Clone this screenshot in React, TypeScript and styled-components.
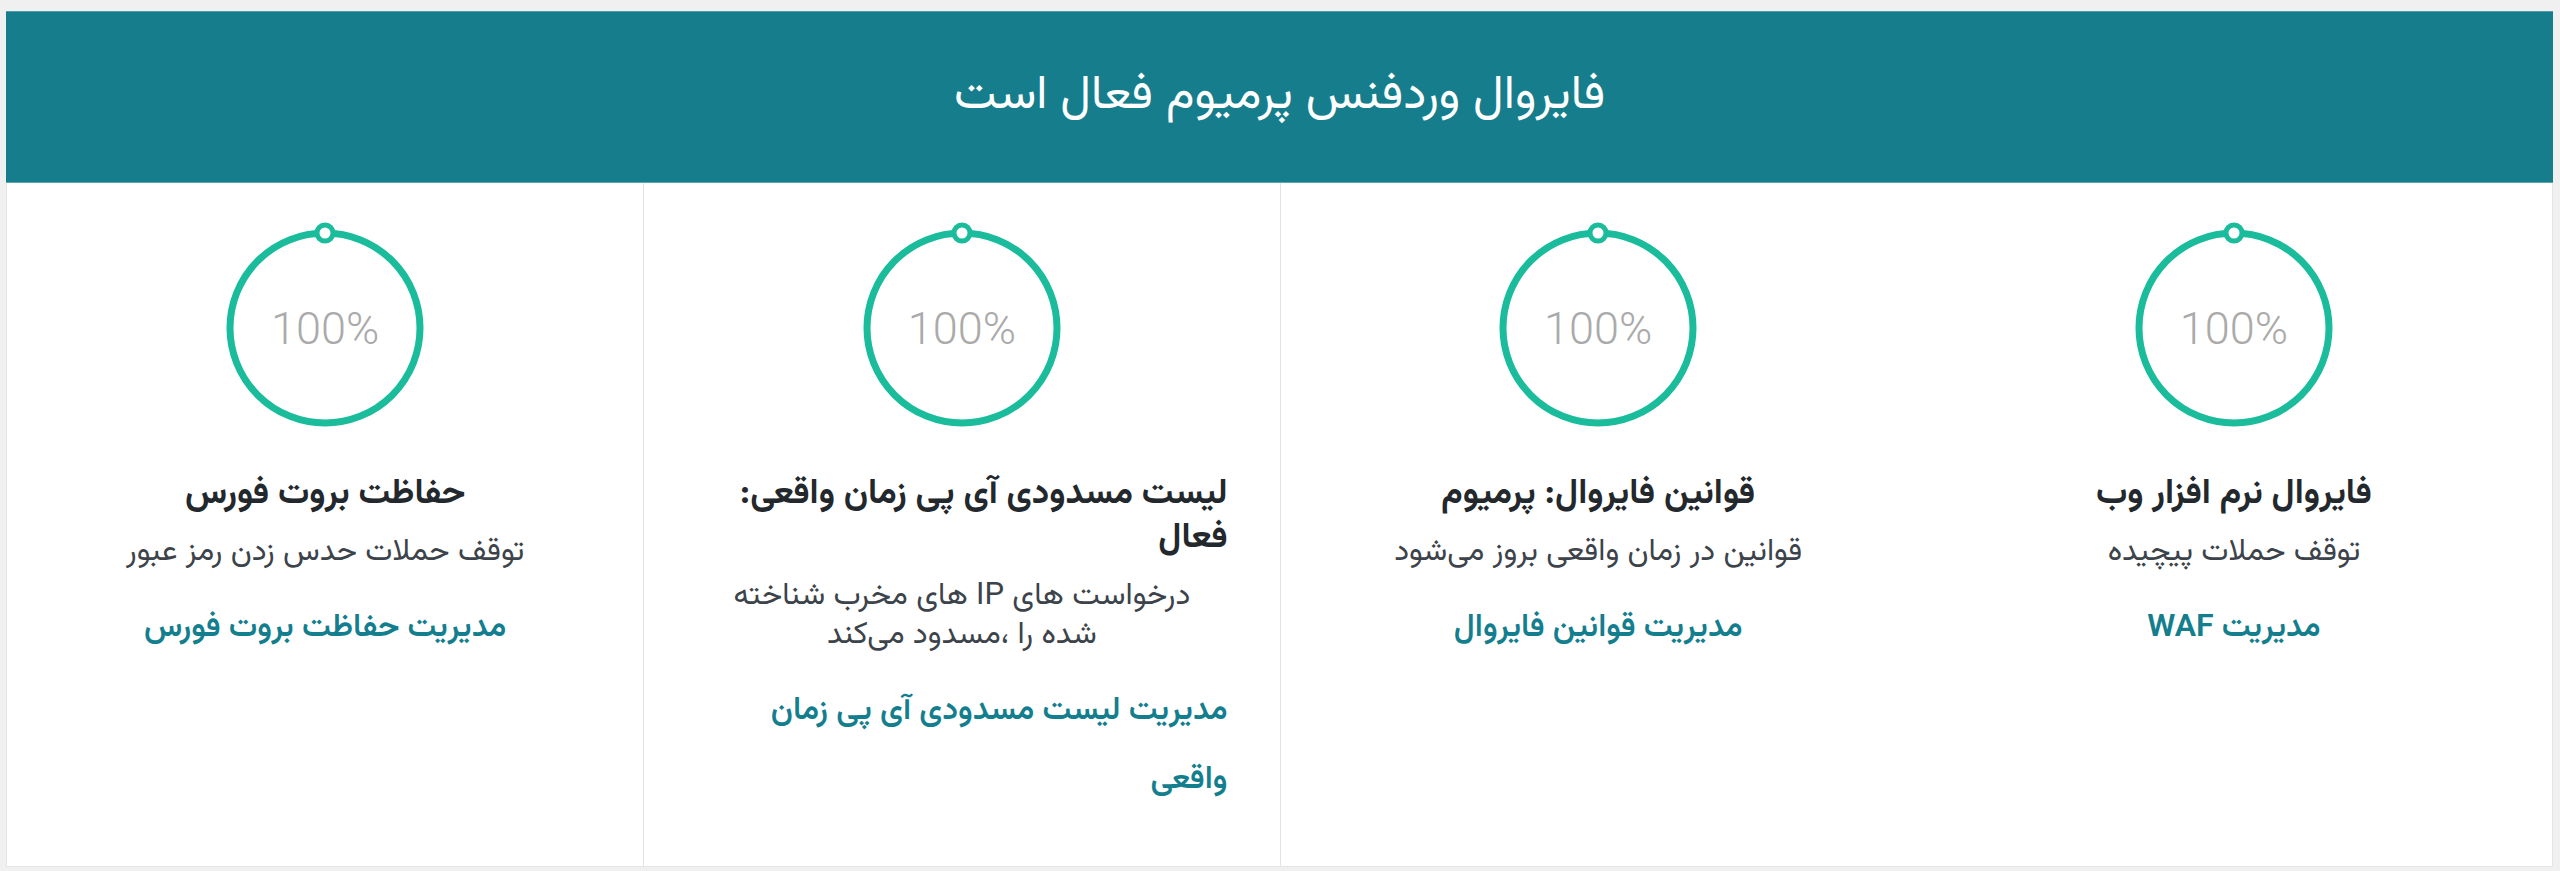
import React from "react";
import styled, { createGlobalStyle } from "styled-components";

const GlobalStyle = createGlobalStyle`
  html, body {
    margin: 0;
    padding: 0;
    background: #f0f0f1;
  }
  body {
    font-family: "Vazirmatn", "Noto Sans Arabic", "DejaVu Sans", sans-serif;
  }
`;

const Wrap = styled.div`
  direction: rtl;
  margin: 11px 7px 0 6px;
`;

const Banner = styled.div`
  background: #157d8b;
  border-top: 1px solid #4d9ea9;
  border-bottom: 1px solid #5aa7b1;
  height: 170px;
  display: flex;
  align-items: center;
  justify-content: center;
`;

const BannerTitle = styled.h2`
  margin: 0;
  color: #ffffff;
  font-size: 48px;
  font-weight: 400;
  line-height: 1.2;
`;

const Card = styled.div`
  background: #ffffff;
  border: 1px solid #e4e5e7;
  border-top: none;
  display: grid;
  grid-template-columns: repeat(4, 1fr);
`;

const Column = styled.div<{ $divider?: boolean }>`
  padding: 35px 52px 51px;
  text-align: center;
  border-left: ${(p) => (p.$divider ? "1px solid #e2e3e5" : "none")};
  display: flex;
  flex-direction: column;
  align-items: center;
`;

const Gauge = styled.div`
  position: relative;
  width: 200px;
  height: 210px;
`;

const GaugeValue = styled.div`
  position: absolute;
  left: 0;
  right: 0;
  top: 110px;
  transform: translateY(-50%);
  direction: ltr;
  font-family: Roboto, "Liberation Sans", sans-serif;
  font-weight: 300;
  font-size: 45px;
  color: #aaaaaa;
  text-align: center;
`;

const Title = styled.h3`
  margin: 45px 0 0;
  display: inline-block;
  text-align: right;
  font-size: 35px;
  font-weight: 700;
  line-height: 44px;
  color: #23282d;
`;

const Desc = styled.p`
  margin: 16px 0 0;
  max-width: 500px;
  font-size: 31px;
  line-height: 39px;
  color: #3c434a;
  text-align: center;
`;

const ManageLink = styled.a`
  margin-top: 22px;
  display: inline-block;
  text-align: right;
  font-size: 32px;
  font-weight: 600;
  line-height: 69px;
  color: #137e8e;
  text-decoration: none;
`;

const Ring: React.FC = () => (
  <svg width="200" height="210" viewBox="0 0 200 210">
    <circle cx="100" cy="110" r="95" fill="none" stroke="#1abc9c" strokeWidth="7" />
    <circle cx="100" cy="15" r="8" fill="#ffffff" stroke="#1abc9c" strokeWidth="5" />
  </svg>
);

type Item = {
  title: string;
  desc: string;
  link: string;
  divider?: boolean;
};

const items: Item[] = [
  { title: "فایروال نرم افزار وب", desc: "توقف حملات پیچیده", link: "مدیریت WAF" },
  {
    title: "قوانین فایروال: پرمیوم",
    desc: "قوانین در زمان واقعی بروز می‌شود",
    link: "مدیریت قوانین فایروال",
    divider: true,
  },
  {
    title: "لیست مسدودی آی پی زمان واقعی: فعال",
    desc: "درخواست های IP های مخرب شناخته شده را ،مسدود می‌کند",
    link: "مدیریت لیست مسدودی آی پی زمان واقعی",
    divider: true,
  },
  {
    title: "حفاظت بروت فورس",
    desc: "توقف حملات حدس زدن رمز عبور",
    link: "مدیریت حفاظت بروت فورس",
  },
];

export default function App() {
  return (
    <>
      <GlobalStyle />
      <Wrap>
        <Banner>
          <BannerTitle>فایروال وردفنس پرمیوم فعال است</BannerTitle>
        </Banner>
        <Card>
          {items.map((it) => (
            <Column key={it.title} $divider={it.divider}>
              <Gauge>
                <Ring />
                <GaugeValue>100%</GaugeValue>
              </Gauge>
              <Title>{it.title}</Title>
              <Desc>{it.desc}</Desc>
              <ManageLink href="#">{it.link}</ManageLink>
            </Column>
          ))}
        </Card>
      </Wrap>
    </>
  );
}
